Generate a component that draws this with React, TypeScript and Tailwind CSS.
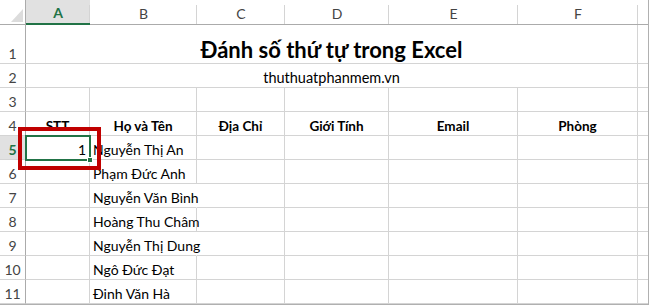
import React from 'react';

const colWidths = [64, 107, 88, 104, 129, 120];
const colNames = ['A', 'B', 'C', 'D', 'E', 'F'];

const headers = ['STT', 'Họ và Tên', 'Địa Chỉ', 'Giới Tính', 'Email', 'Phòng'];

const people = [
  { no: 5, stt: '1', name: 'Nguyễn Thị An' },
  { no: 6, name: 'Phạm Đức Anh' },
  { no: 7, name: 'Nguyễn Văn Bình', overflow: true },
  { no: 8, name: 'Hoàng Thu Châm' },
  { no: 9, name: 'Nguyễn Thị Dung', overflow: true },
  { no: 10, name: 'Ngô Đức Đạt' },
  { no: 11, name: 'Đinh Văn Hà' },
];

function RowHeader({ n, h, active }: { n: number; h: string; active?: boolean }) {
  return (
    <div
      className={`${h} flex w-[26px] shrink-0 items-end justify-center border-r border-b border-r-[#ababab] border-b-[#d4d4d4] pb-[2px] text-[14px] leading-none ${
        active ? 'bg-[#e1e1e1] font-bold text-[#217346]' : 'text-[#444]'
      }`}
    >
      {n}
    </div>
  );
}

export default function App() {
  return (
    <div
      className="relative h-[305px] w-[649px] overflow-hidden border-r border-b border-[#b0b0b0] bg-white text-black"
      style={{ fontFamily: 'Lato, "Open Sans", sans-serif' }}
    >
      {/* column headers */}
      <div className="flex h-[25px]">
        <div className="relative w-[26px] shrink-0 border-r border-b border-[#ababab]">
          <svg className="absolute left-[11px] top-[9px]" width="12" height="13" viewBox="0 0 12 13">
            <polygon points="12,0 12,13 0,13" fill="#dcdcdc" />
          </svg>
        </div>
        {colNames.map((c, i) => (
          <div
            key={c}
            style={{ width: colWidths[i] }}
            className={`relative flex shrink-0 items-center justify-center border-b pt-[2px] text-[14px] after:absolute after:right-0 after:top-[5px] after:bottom-0 after:w-px after:bg-[#d4d4d4] ${
              i === 0
                ? 'border-b-2 border-[#217346] bg-[#e1e1e1] font-bold text-[#217346]'
                : 'border-[#ababab] text-[#444]'
            }`}
          >
            {c}
          </div>
        ))}
        <div className="w-[10px] shrink-0 border-b border-[#ababab]" />
      </div>

      {/* row 1: title (merged A:F) */}
      <div className="flex h-[39px]">
        <RowHeader n={1} h="h-[39px]" />
        <div className="flex w-[612px] shrink-0 items-end justify-center border-r border-b border-[#d4d4d4] pb-[2px] text-[22px] font-bold leading-none">
          Đánh số thứ tự trong Excel
        </div>
        <div className="w-[10px] shrink-0 border-b border-[#d4d4d4]" />
      </div>

      {/* row 2: subtitle (merged A:F) */}
      <div className="flex h-[24px]">
        <RowHeader n={2} h="h-[24px]" />
        <div className="flex w-[612px] shrink-0 items-end justify-center border-r border-b border-[#d4d4d4] pb-[2px] text-[14.5px] leading-none">
          thuthuatphanmem.vn
        </div>
        <div className="w-[10px] shrink-0 border-b border-[#d4d4d4]" />
      </div>

      {/* row 3: empty */}
      <div className="flex h-[24px]">
        <RowHeader n={3} h="h-[24px]" />
        {colWidths.map((w, i) => (
          <div key={i} style={{ width: w }} className="shrink-0 border-r border-b border-[#d4d4d4]" />
        ))}
        <div className="w-[10px] shrink-0 border-b border-[#d4d4d4]" />
      </div>

      {/* row 4: column titles */}
      <div className="flex h-[24px]">
        <RowHeader n={4} h="h-[24px]" />
        {headers.map((t, i) => (
          <div
            key={t}
            style={{ width: colWidths[i] }}
            className="flex shrink-0 items-end justify-center border-r border-b border-[#d4d4d4] pb-[2px] text-[13.5px] font-bold leading-none"
          >
            {t}
          </div>
        ))}
        <div className="w-[10px] shrink-0 border-b border-[#d4d4d4]" />
      </div>

      {/* data rows */}
      {people.map((p) => (
        <div key={p.no} className="flex h-[24px]">
          <RowHeader n={p.no} h="h-[24px]" active={p.no === 5} />
          <div className="flex w-[64px] shrink-0 items-end justify-end border-r border-b border-[#d4d4d4] pr-[3px] pb-[2px] text-[14px] leading-none">
            {p.stt}
          </div>
          <div
            className={`flex w-[107px] shrink-0 items-end whitespace-nowrap border-b border-[#d4d4d4] pl-[3px] pb-[2px] text-[14px] leading-none ${
              p.overflow ? 'border-r border-r-transparent' : 'border-r'
            }`}
          >
            {p.name}
          </div>
          {colWidths.slice(2).map((w, i) => (
            <div key={i} style={{ width: w }} className="shrink-0 border-r border-b border-[#d4d4d4]" />
          ))}
          <div className="w-[10px] shrink-0 border-b border-[#d4d4d4]" />
        </div>
      ))}

      {/* active cell A5 */}
      <div className="pointer-events-none absolute left-[25px] top-[135px] h-[26px] w-[66px] border-2 border-[#217346]">
        <div className="absolute -right-[4px] -bottom-[4px] h-[6px] w-[6px] border border-white bg-[#217346]" />
      </div>

      {/* red highlight */}
      <div className="pointer-events-none absolute left-[18px] top-[127px] h-[43px] w-[83px] border-4 border-[#c00000]" />
    </div>
  );
}
